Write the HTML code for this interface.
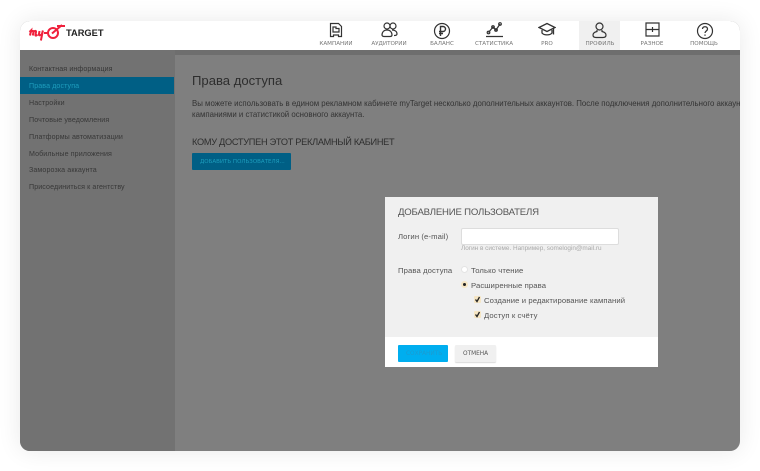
<!DOCTYPE html>
<html lang="ru"><head><meta charset="utf-8"><style>
*{box-sizing:border-box}
html,body{margin:0;padding:0;width:760px;height:471px;overflow:hidden;background:#fff;font-family:"Liberation Sans","DejaVu Sans",sans-serif}
.t{position:absolute;white-space:nowrap;line-height:1}
#card{position:absolute;left:20px;top:21px;width:720px;height:430px;border-radius:10px;overflow:hidden;background:#7f7f7f;box-shadow:0 0 24px rgba(0,0,0,.09)}
#page{position:absolute;left:-20px;top:-21px;width:760px;height:471px;filter:blur(.3px)}
.side{position:absolute;left:20px;top:50px;width:155px;height:401px;background:#727272}
.band{position:absolute;left:20px;top:50px;width:720px;height:5px;background:#6e6e6e}
.nav{font-size:7.1px;color:#383838;left:29px;letter-spacing:.1px}
.lab{font-family:"DejaVu Sans",sans-serif;font-size:5.6px;color:#777;text-align:center;width:60px;top:42px}
.f{font-size:7.7px;color:#555;letter-spacing:.1px}
svg{position:absolute;fill:none;stroke:#333;stroke-width:1.2}
</style></head><body>
<div id="card"><div id="page">
<div class="band"></div>
<div class="side"></div>
<div style="position:absolute;left:20px;top:21px;width:720px;height:29px;background:#fff"></div>
<div style="position:absolute;left:579px;top:21px;width:41px;height:29px;background:#f0f0f0"></div>

<svg style="left:28px;top:22px;stroke:#f0213c;stroke-width:2" width="40" height="24"><path d="M1.500 10l1.500-1.500-1 5M3 10c1-1.500 2.500-1.500 2.500 0l-.7 3.500M5.500 10c1-1.500 2.800-1.500 2.500 0l-.6 3c0 1 1 .8 2-.5M11.500 9l-.6 3.500c0 1.200 1.800 1 3-.5l1-3.500-2 10"/><circle cx="25" cy="11" r="5"/><path d="M24 11.500L34 3M29 4h8M16 11h4"/></svg>
<span class="t" style="left:66px;top:28px;font:bold 9.300px 'Liberation Sans',sans-serif;color:#222">TARGET</span>

<svg style="left:329px;top:22px" width="14" height="16"><path d="M1.500 1.500h8l3 3v10h-3v-1.500h-5v1.500h-3zM4 5h3v1.500h3v3.500h-6z"/></svg>
<span class="t lab" style="left:306px">КАМПАНИИ</span>
<svg style="left:381px;top:22px" width="17" height="16"><circle cx="6" cy="4" r="3"/><circle cx="12" cy="4" r="3"/><path d="M1 13c0-3 2-5 5-5s5 2 5 5c0 1-1 1.500-2 1.500h-6c-1 0-2-.5-2-1.500zM11 8c3 0 5 1.500 5 4 0 1-1 1.500-3 1.500"/></svg>
<span class="t lab" style="left:359px">АУДИТОРИИ</span>
<svg style="left:433px;top:22px" width="18" height="18"><circle cx="9" cy="9" r="7.500"/><path d="M7.500 14V4.500h2.500a2.300 2.300 0 0 1 0 5H6M6 11.500h4" stroke-width="1.400"/></svg>
<span class="t lab" style="left:412px">БАЛАНС</span>
<svg style="left:486px;top:21px" width="17" height="17"><path d="M2.500 11.500L7 6l3 3 4-6"/><circle cx="2.500" cy="11.500" r="1.300"/><circle cx="7" cy="6" r="1.300"/><circle cx="10" cy="9" r="1.300"/><circle cx="14" cy="3" r="1.300"/><path d="M0 15.500h17"/></svg>
<span class="t lab" style="left:464px">СТАТИСТИКА</span>
<svg style="left:538px;top:22px" width="18" height="16"><path d="M1 5.500L9 1.500l8 4-8 4zM4 8v3c2 2.500 8 2.500 10 0V8M15.500 6.500v6" stroke-width="1.300"/></svg>
<span class="t lab" style="left:517px">PRO</span>
<svg style="left:592px;top:22px" width="15" height="17"><circle cx="7.500" cy="4.500" r="3.500"/><path d="M5 8v1.500c-2 .5-4 1.500-4 3.500 0 1.500 1 2.500 3 2.500h7c2 0 3-1 3-2.500 0-2-2-3-4-3.500V8"/></svg>
<span class="t lab" style="left:570px">ПРОФИЛЬ</span>
<svg style="left:645px;top:22px" width="15" height="15"><path d="M1 1h13v13H1zM1 7.500h13M7.500 5v5"/></svg>
<span class="t lab" style="left:622px">РАЗНОЕ</span>
<svg style="left:696px;top:22px" width="18" height="18"><circle cx="9" cy="9" r="7.500"/><path d="M6.500 7c0-3 5-3 5 0 0 2-2.500 2-2.500 4M9 12.500v1.300" stroke-width="1.300"/></svg>
<span class="t lab" style="left:674px">ПОМОЩЬ</span>

<span class="t nav" style="top:66px">Контактная информация</span>
<div style="position:absolute;left:20px;top:77px;width:154px;height:17px;background:#005f85"></div>
<span class="t nav" style="top:83px;color:#1d9dbd">Права доступа</span>
<span class="t nav" style="top:100px">Настройки</span>
<span class="t nav" style="top:117px">Почтовые уведомления</span>
<span class="t nav" style="top:134px">Платформы автоматизации</span>
<span class="t nav" style="top:151px">Мобильные приложения</span>
<span class="t nav" style="top:167px">Заморозка аккаунта</span>
<span class="t nav" style="top:184px">Присоединиться к агентству</span>

<span class="t" style="left:192px;top:73.500px;font-size:13.100px;color:#2e2e2e">Права доступа</span>
<span class="t" style="left:192px;top:100px;font-size:7.850px;color:#333">Вы можете использовать в едином рекламном кабинете myTarget несколько дополнительных аккаунтов. После подключения дополнительного аккаунта</span>
<span class="t" style="left:192px;top:111px;font-size:7.850px;color:#333">кампаниями и статистикой основного аккаунта.</span>
<span class="t" style="left:192px;top:138px;font-size:9.200px;letter-spacing:-.28px;color:#2e2e2e">КОМУ ДОСТУПЕН ЭТОТ РЕКЛАМНЫЙ КАБИНЕТ</span>
<div style="position:absolute;left:192px;top:153px;width:99px;height:17px;background:#005f85;border-radius:1px"></div>
<span class="t" style="left:200px;top:160px;font-size:5.500px;color:#1d9dbd;font-family:'DejaVu Sans',sans-serif">ДОБАВИТЬ ПОЛЬЗОВАТЕЛЯ...</span>

<div style="position:absolute;left:385px;top:197px;width:273px;height:170px;background:#fff"></div>
<div style="position:absolute;left:385px;top:197px;width:273px;height:140px;background:#f0f0f0"></div>
<span class="t" style="left:398px;top:208px;font-size:9.600px;letter-spacing:-.2px;color:#555">ДОБАВЛЕНИЕ ПОЛЬЗОВАТЕЛЯ</span>
<span class="t f" style="left:398px;top:233px">Логин (e-mail)</span>
<div style="position:absolute;left:461px;top:228px;width:158px;height:17px;background:#fff;border:1px solid #ddd;border-radius:2px"></div>
<span class="t" style="left:461px;top:246px;font-size:6.400px;color:#aaa">Логин в системе. Например, somelogin@mail.ru</span>
<span class="t f" style="left:398px;top:267px">Права доступа</span>
<div style="position:absolute;left:461px;top:266px;width:7px;height:7px;border-radius:50%;background:#fff;border:1px solid #e4e4e4"></div>
<span class="t f" style="left:471px;top:267px">Только чтение</span>
<div style="position:absolute;left:461px;top:281px;width:7px;height:7px;border-radius:50%;background:#222;border:2px solid #f6e6c4"></div>
<span class="t f" style="left:471px;top:282px">Расширенные права</span>
<div style="position:absolute;left:474px;top:296px;width:7px;height:7px;background:#f6e6c4;border-radius:1px"></div>
<svg style="left:474px;top:296px;stroke:#222;stroke-width:1.300" width="7" height="7"><path d="M1.500 3.500l1.500 2 2.500-4.500"/></svg>
<span class="t f" style="left:484px;top:297px">Создание и редактирование кампаний</span>
<div style="position:absolute;left:474px;top:311px;width:7px;height:7px;background:#f6e6c4;border-radius:1px"></div>
<svg style="left:474px;top:311px;stroke:#222;stroke-width:1.300" width="7" height="7"><path d="M1.500 3.500l1.500 2 2.500-4.500"/></svg>
<span class="t f" style="left:484px;top:312px">Доступ к счёту</span>
<div style="position:absolute;left:398px;top:345px;width:50px;height:17px;background:#00aeef;border-radius:1px"></div>
<span class="t" style="left:406px;top:352px;font-size:5.800px;color:#1c9bd0;font-family:'DejaVu Sans',sans-serif">СОХРАНИТЬ</span>
<div style="position:absolute;left:455px;top:345px;width:41px;height:17px;background:#f0f0f0;border-radius:1px;box-shadow:0 1px 1px rgba(0,0,0,.15)"></div>
<span class="t" style="left:463px;top:352px;font-size:5.800px;color:#555;font-family:'DejaVu Sans',sans-serif">ОТМЕНА</span>
</div></div>
</body></html>
